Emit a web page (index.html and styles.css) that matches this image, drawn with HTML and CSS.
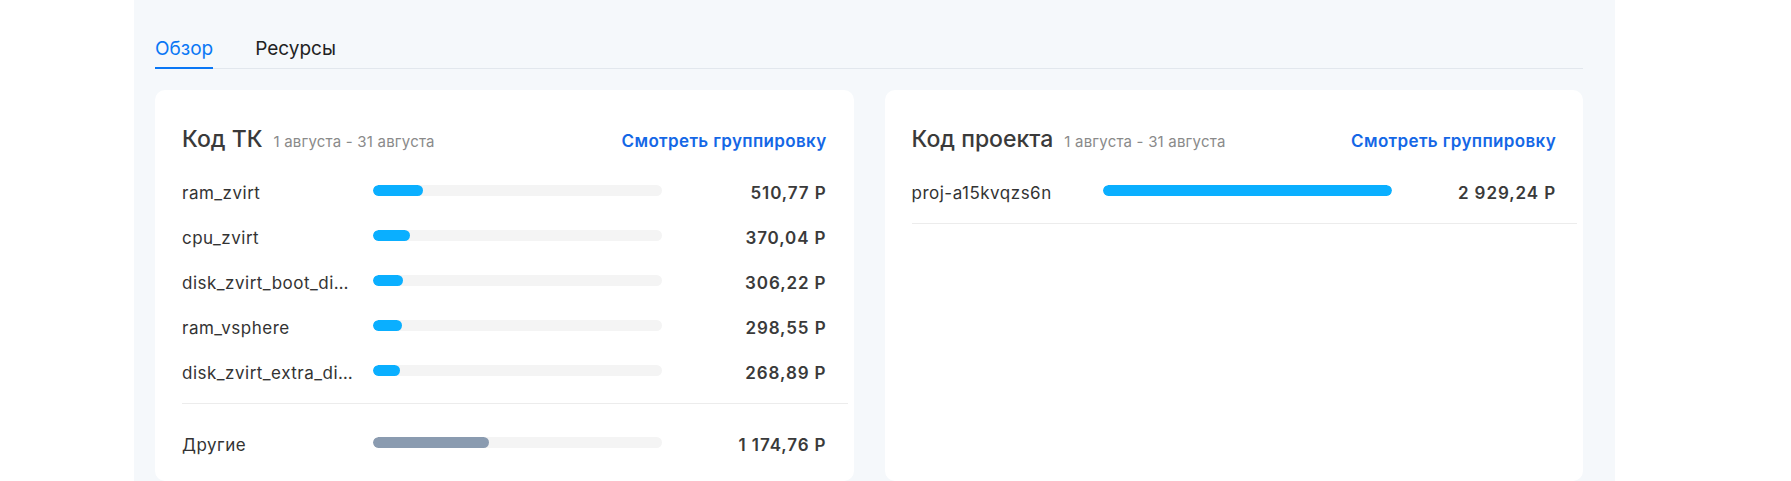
FILE: index.html
```html
<!DOCTYPE html>
<html lang="ru">
<head>
    <meta charset="UTF-8">
    <meta name="viewport" content="width=device-width, initial-scale=1.0">
    <title>Обзор</title>
    <link rel="stylesheet" href="styles.css">
</head>
<body>
    <div class="panel">
        <div class="tabs">
            <a class="tab active" href="#">Обзор</a>
            <a class="tab" href="#">Ресурсы</a>
        </div>

        <div class="cards">
            <div class="card">
                <div class="card-header">
                    <div class="card-title">
                        <h2>Код ТК</h2>
                        <span class="period">1 августа - 31 августа</span>
                    </div>
                    <a class="group-link" href="#">Смотреть группировку</a>
                </div>

                <div class="rows">
                    <div class="row">
                        <span class="label">ram_zvirt</span>
                        <div class="track"><div class="fill" style="width: 17.44%"></div></div>
                        <span class="value">510,77 Р</span>
                    </div>
                    <div class="row">
                        <span class="label">cpu_zvirt</span>
                        <div class="track"><div class="fill" style="width: 12.63%"></div></div>
                        <span class="value">370,04 Р</span>
                    </div>
                    <div class="row">
                        <span class="label">disk_zvirt_boot_disk_standard</span>
                        <div class="track"><div class="fill" style="width: 10.45%"></div></div>
                        <span class="value">306,22 Р</span>
                    </div>
                    <div class="row">
                        <span class="label">ram_vsphere</span>
                        <div class="track"><div class="fill" style="width: 10.19%"></div></div>
                        <span class="value">298,55 Р</span>
                    </div>
                    <div class="row">
                        <span class="label">disk_zvirt_extra_disk_standard</span>
                        <div class="track"><div class="fill" style="width: 9.18%"></div></div>
                        <span class="value">268,89 Р</span>
                    </div>
                </div>

                <div class="row other">
                    <span class="label">Другие</span>
                    <div class="track"><div class="fill" style="width: 40.1%"></div></div>
                    <span class="value">1 174,76 Р</span>
                </div>
            </div>

            <div class="card">
                <div class="card-header">
                    <div class="card-title">
                        <h2>Код проекта</h2>
                        <span class="period">1 августа - 31 августа</span>
                    </div>
                    <a class="group-link" href="#">Смотреть группировку</a>
                </div>

                <div class="rows">
                    <div class="row">
                        <span class="label">proj-a15kvqzs6n</span>
                        <div class="track"><div class="fill" style="width: 100%"></div></div>
                        <span class="value">2 929,24 Р</span>
                    </div>
                </div>
            </div>
        </div>
    </div>
</body>
</html>
```

FILE: styles.css
```css
body {
    font-family: 'Inter', 'Noto Sans', sans-serif;
    background-color: #ffffff;
    margin: 0;
    padding: 0;
    color: #333;
}

.panel {
    margin-left: 134px;
    width: 1481px;
    min-height: 481px;
    box-sizing: border-box;
    padding: 0 32px 0 21px;
    background-color: #f5f8fb;
}

.tabs {
    display: flex;
    gap: 42px;
    padding-top: 35px;
    border-bottom: 1px solid #e2e7ed;
}

.tab {
    display: block;
    font-size: 19px;
    line-height: 28px;
    padding-bottom: 4px;
    margin-bottom: -1px;
    border-bottom: 2px solid transparent;
    color: #222;
    text-decoration: none;
}

.tab.active {
    color: #0a77f5;
    border-bottom-color: #0a77f5;
}

.cards {
    display: grid;
    grid-template-columns: 1fr 1fr;
    gap: 31px;
    margin-top: 21px;
}

.card {
    background-color: white;
    border-radius: 10px;
    padding: 33px 27px 13px;
    height: 391px;
    box-sizing: border-box;
}

.card-header {
    display: flex;
    justify-content: space-between;
    align-items: baseline;
}

.card-title {
    display: flex;
    align-items: baseline;
    gap: 11px;
}

.card-title h2 {
    margin: 0;
    font-size: 23px;
    line-height: 32px;
    font-weight: 500;
    color: #3a3a3a;
}

.period {
    font-size: 15px;
    letter-spacing: 0.2px;
    color: #8a8a8a;
}

.group-link {
    font-size: 17px;
    font-weight: 600;
    letter-spacing: 0.35px;
    color: #1467e6;
    text-decoration: none;
}

.rows {
    margin-top: 15px;
    margin-right: -21px;
    padding-right: 21px;
    padding-bottom: 8px;
    border-bottom: 1px solid #ececec;
}

.row {
    display: flex;
    align-items: center;
    height: 45px;
}

.label {
    width: 171px;
    margin-right: 20px;
    font-size: 17px;
    line-height: 24px;
    letter-spacing: 0.5px;
    color: #333;
    white-space: nowrap;
    overflow: hidden;
    text-overflow: ellipsis;
}

.track {
    width: 289px;
    height: 11px;
    margin-bottom: 5px;
    border-radius: 6px;
    background-color: #f4f4f4;
    overflow: hidden;
}

.fill {
    height: 100%;
    border-radius: 6px;
    background-color: #0aafff;
}

.value {
    flex: 1;
    text-align: right;
    font-size: 17px;
    font-weight: 600;
    letter-spacing: 0.9px;
    color: #3a3a3a;
}

.other {
    margin-top: 18px;
}

.other .fill {
    background-color: #8a9bb0;
}
```
